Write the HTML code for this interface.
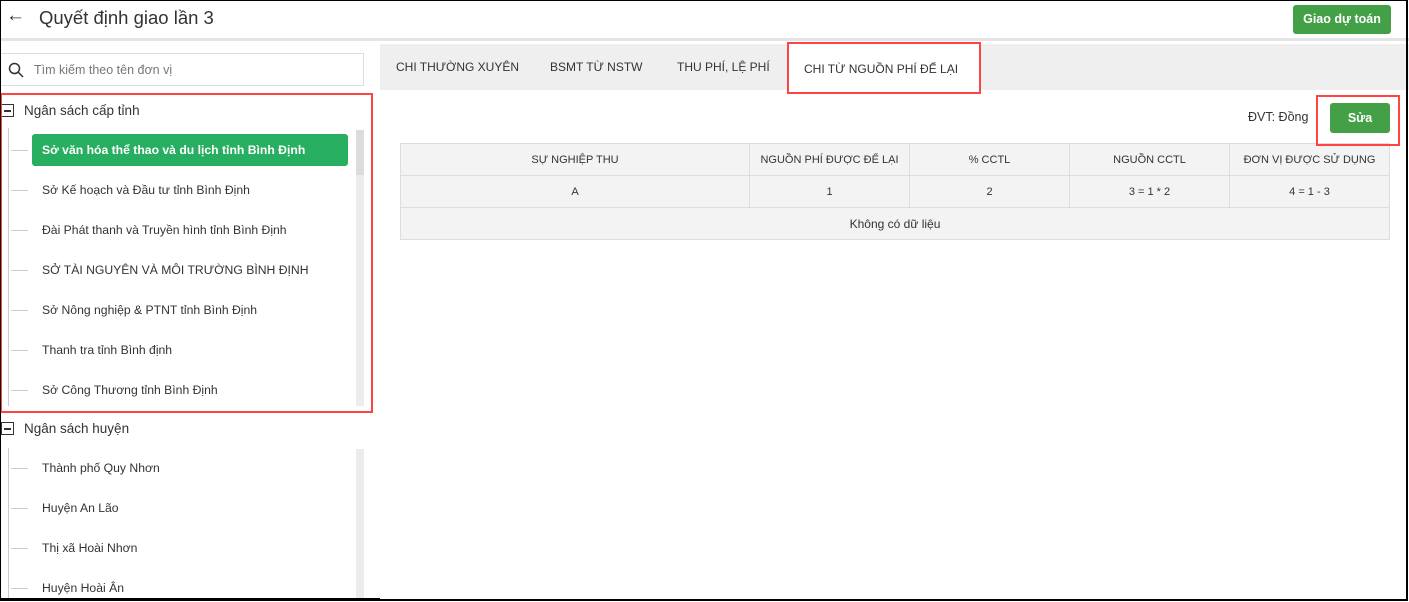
<!DOCTYPE html>
<html><head><meta charset="utf-8"><style>
*{box-sizing:border-box;margin:0;padding:0}
body{width:1409px;height:602px;overflow:hidden;background:#fff;font-family:"Liberation Sans",Arial,sans-serif;color:#333;position:relative}
.frame{position:absolute;left:0;top:0;width:1408px;height:601px;border:1px solid #000;border-right-width:2px;border-bottom-width:2px;pointer-events:none;z-index:10}
.hdr{position:absolute;left:0;top:0;width:1409px;height:41px;background:#fff;border-bottom:3px solid #e4e4e4}
.title{position:absolute;left:39px;top:7px;font-size:18.5px;color:#333}
.back{position:absolute;left:6px;top:5px;font-size:19px;color:#333}
.btn{position:absolute;background:#43a047;color:#fff;font-weight:bold;border-radius:3px;text-align:center}
.search{position:absolute;left:0;top:53px;width:364px;height:33px;border:1px solid #ddd;background:#fff}
.search span{position:absolute;left:33px;top:9px;font-size:12.5px;color:#777}
.grp{position:absolute;left:24px;font-size:13.5px;color:#333}
.minus{position:absolute;left:1px;width:13px;height:13px;border:1px solid #333}
.minus:after{content:"";position:absolute;left:2px;top:5px;width:7px;height:1.5px;background:#333}
.item{position:absolute;left:42px;font-size:12.2px;color:#333}
.tl{position:absolute;left:8px;width:1px;background:#ccc}
.th{position:absolute;left:11px;width:17px;height:1px;background:#ccc}
.sb{position:absolute;left:356px;width:8px;background:#ececec}
.tabs{position:absolute;left:380px;top:44px;width:1029px;height:46px;background:#efefef}
.tab{position:absolute;top:16px;font-size:12px;color:#333}
table{position:absolute;left:400px;top:143px;width:990px;border-collapse:collapse;font-size:11px;background:#f3f3f3}
td{border:1px solid #ddd;text-align:center;height:32px;color:#333}
.red{position:absolute;border:2px solid #f44;z-index:5}
</style></head><body>
<div class="hdr"><div class="back">←</div><div class="title">Quyết định giao lần 3</div>
<div class="btn" style="left:1293px;top:5px;width:98px;height:29px;line-height:29px;font-size:12.5px">Giao dự toán</div></div>
<div class="search"><svg style="position:absolute;left:7px;top:8px" width="16" height="16" viewBox="0 0 16 16"><circle cx="6.5" cy="6.5" r="5" fill="none" stroke="#333" stroke-width="1.5"/><line x1="10" y1="10" x2="15" y2="15" stroke="#333" stroke-width="1.5"/></svg><span>Tìm kiếm theo tên đơn vị</span></div>
<div class="minus" style="top:104px"></div><div class="grp" style="top:103px">Ngân sách cấp tỉnh</div>
<div class="tl" style="top:128px;height:278px"></div>
<div class="sb" style="top:130px;height:276px"></div><div style="position:absolute;left:356px;top:130px;width:8px;height:45px;background:#dcdcdc"></div>
<div style="position:absolute;left:32px;top:134px;width:316px;height:32px;background:#27ae60;border-radius:3px"></div>
<div class="th" style="top:150px"></div><div class="item" style="top:143px;color:#fff;font-weight:bold">Sở văn hóa thể thao và du lịch tỉnh Bình Định</div>
<div class="th" style="top:190px"></div><div class="item" style="top:183px">Sở Kế hoạch và Đầu tư tỉnh Bình Định</div>
<div class="th" style="top:230px"></div><div class="item" style="top:223px">Đài Phát thanh và Truyền hình tỉnh Bình Định</div>
<div class="th" style="top:270px"></div><div class="item" style="top:263px">SỞ TÀI NGUYÊN VÀ MÔI TRƯỜNG BÌNH ĐỊNH</div>
<div class="th" style="top:310px"></div><div class="item" style="top:303px">Sở Nông nghiệp &amp; PTNT tỉnh Bình Định</div>
<div class="th" style="top:350px"></div><div class="item" style="top:343px">Thanh tra tỉnh Bình định</div>
<div class="th" style="top:390px"></div><div class="item" style="top:383px">Sở Công Thương tỉnh Bình Định</div>
<div class="red" style="left:0;top:93px;width:373px;height:320px"></div>
<div class="minus" style="top:422px"></div><div class="grp" style="top:421px">Ngân sách huyện</div>
<div class="tl" style="top:448px;height:152px"></div>
<div class="sb" style="top:449px;height:151px"></div>
<div class="th" style="top:468px"></div><div class="item" style="top:461px">Thành phố Quy Nhơn</div>
<div class="th" style="top:508px"></div><div class="item" style="top:501px">Huyện An Lão</div>
<div class="th" style="top:548px"></div><div class="item" style="top:541px">Thị xã Hoài Nhơn</div>
<div class="th" style="top:588px"></div><div class="item" style="top:581px">Huyện Hoài Ân</div>
<div style="position:absolute;left:0;top:598px;width:380px;height:2px;background:#000"></div>
<div class="tabs">
<div class="tab" style="left:16px">CHI THƯỜNG XUYÊN</div>
<div class="tab" style="left:170px">BSMT TỪ NSTW</div>
<div class="tab" style="left:297px">THU PHÍ, LỆ PHÍ</div>
<div style="position:absolute;left:409px;top:0;width:190px;height:46px;background:#fff"></div>
<div class="tab" style="left:424px;top:18px">CHI TỪ NGUỒN PHÍ ĐỂ LẠI</div>
</div>
<div class="red" style="left:787px;top:42px;width:194px;height:52px"></div>
<div style="position:absolute;left:1248px;top:110px;font-size:12.5px;color:#333">ĐVT: Đồng</div>
<div class="btn" style="left:1330px;top:103px;width:60px;height:30px;line-height:30px;font-size:12.5px">Sửa</div>
<div class="red" style="left:1316px;top:95px;width:84px;height:51px"></div>
<table>
<tr><td style="width:349px">SỰ NGHIỆP THU</td><td style="width:160px">NGUỒN PHÍ ĐƯỢC ĐỂ LẠI</td><td style="width:160px">% CCTL</td><td style="width:160px">NGUỒN CCTL</td><td>ĐƠN VỊ ĐƯỢC SỬ DỤNG</td></tr>
<tr><td>A</td><td>1</td><td>2</td><td>3 = 1 * 2</td><td>4 = 1 - 3</td></tr>
<tr><td colspan="5" style="font-size:12px">Không có dữ liệu</td></tr>
</table>
<div class="frame"></div>
</body></html>
